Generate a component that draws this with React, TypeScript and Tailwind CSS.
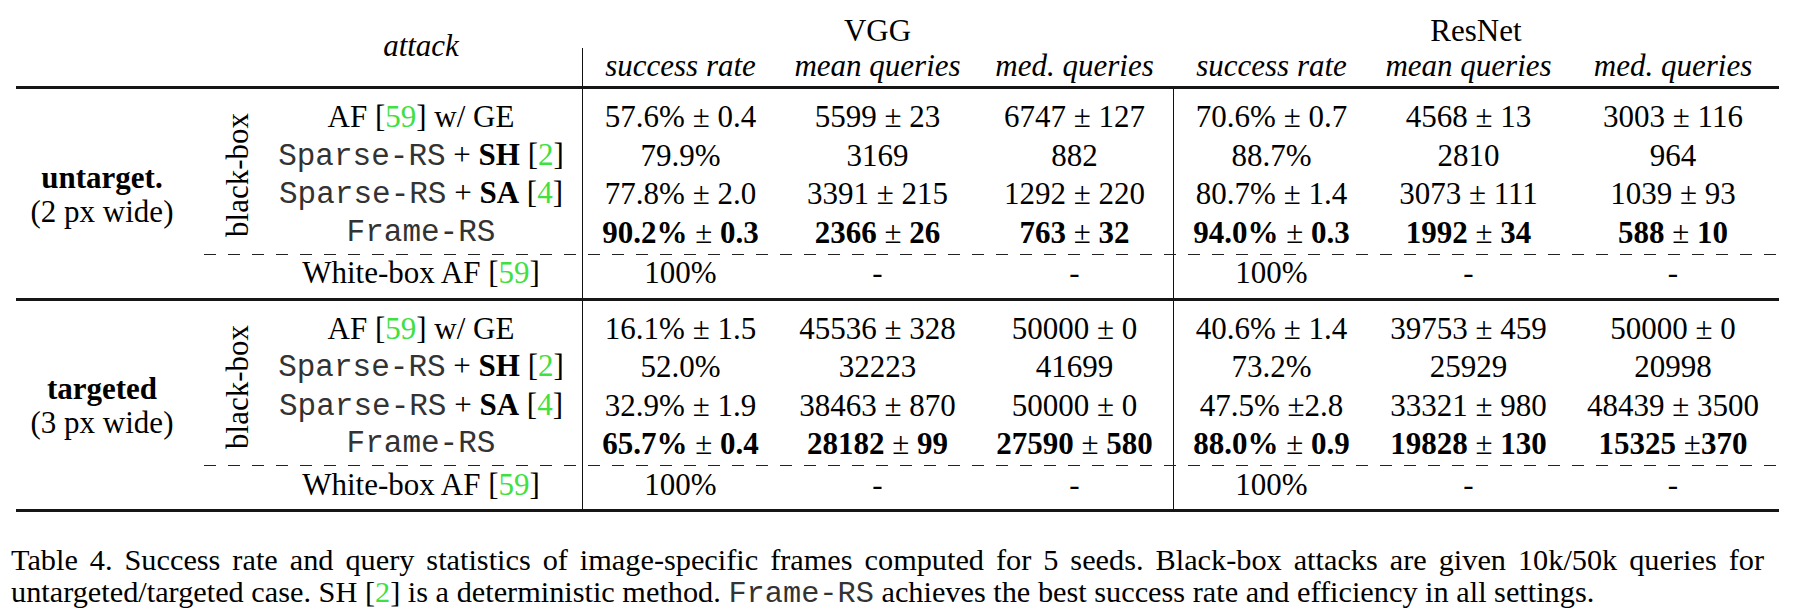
import React from "react";

const cols = "grid-cols-[172px_72px_322px_197px_197px_197px_197px_197px_212px]";
const bodyRows = "grid-rows-[9px_38.5px_38.5px_38.5px_38.5px_4px_35px_6.5px]";
const rowStarts = ["row-start-2", "row-start-3", "row-start-4", "row-start-5"];
const colStarts = ["col-start-4", "col-start-5", "col-start-6", "col-start-7", "col-start-8", "col-start-9"];

const Cite = ({ n }: { n: string }) => (
  <>
    [<span className="text-[#3fe03f]">{n}</span>]
  </>
);

const Mono = ({ children }: { children: React.ReactNode }) => (
  <span className="font-['Liberation_Mono',monospace] text-[#333]">{children}</span>
);

// "a ± b" with the numbers bold but the ± regular, as in the paper
function Value({ text, bold }: { text: string; bold?: boolean }) {
  if (!bold) return <span>{text}</span>;
  const parts = text.split("±");
  return (
    <span>
      <b>{parts[0]}</b>
      {parts.length > 1 && (
        <>
          ±<b>{parts[1]}</b>
        </>
      )}
    </span>
  );
}

type Section = {
  title: string;
  width: string;
  rows: string[][];
  best: string[];
};

const sections: Section[] = [
  {
    title: "untarget.",
    width: "(2 px wide)",
    rows: [
      ["57.6% ± 0.4", "5599 ± 23", "6747 ± 127", "70.6% ± 0.7", "4568 ± 13", "3003 ± 116"],
      ["79.9%", "3169", "882", "88.7%", "2810", "964"],
      ["77.8% ± 2.0", "3391 ± 215", "1292 ± 220", "80.7% ± 1.4", "3073 ± 111", "1039 ± 93"],
    ],
    best: ["90.2% ± 0.3", "2366 ± 26", "763 ± 32", "94.0% ± 0.3", "1992 ± 34", "588 ± 10"],
  },
  {
    title: "targeted",
    width: "(3 px wide)",
    rows: [
      ["16.1% ± 1.5", "45536 ± 328", "50000 ± 0", "40.6% ± 1.4", "39753 ± 459", "50000 ± 0"],
      ["52.0%", "32223", "41699", "73.2%", "25929", "20998"],
      ["32.9% ± 1.9", "38463 ± 870", "50000 ± 0", "47.5% ±2.8", "33321 ± 980", "48439 ± 3500"],
    ],
    best: ["65.7% ± 0.4", "28182 ± 99", "27590 ± 580", "88.0% ± 0.9", "19828 ± 130", "15325 ±370"],
  },
];

const attacks = [
  <span>
    AF <Cite n="59" /> w/ GE
  </span>,
  <span>
    <Mono>Sparse-RS</Mono> + <b>SH</b> <Cite n="2" />
  </span>,
  <span>
    <Mono>Sparse-RS</Mono> + <b>SA</b> <Cite n="4" />
  </span>,
  <Mono>Frame-RS</Mono>,
];

const whiteBox = ["100%", "-", "-", "100%", "-", "-"];

const cell = "flex items-center justify-center whitespace-nowrap";

function Rule() {
  return <div className="w-[1763px] h-[3px] bg-[#161616]" />;
}

function Body({ s }: { s: Section }) {
  const all = [...s.rows, s.best];
  return (
    <div className={`grid ${cols} ${bodyRows} w-[1763px]`}>
      <div className="col-start-4 row-start-1 row-span-8 border-l border-[#111]" />
      <div className="col-start-7 row-start-1 row-span-8 border-l border-[#111]" />

      <div className="col-start-1 row-start-2 row-span-6 flex flex-col items-center justify-center leading-[34px]">
        <b>{s.title}</b>
        <span>{s.width}</span>
      </div>
      <div className="col-start-2 row-start-2 row-span-4 flex items-center justify-center pl-[26px]">
        <span className="[writing-mode:vertical-rl] rotate-180 leading-none">black-box</span>
      </div>

      {attacks.map((a, i) => (
        <div key={i} className={`col-start-3 ${rowStarts[i]} ${cell}`}>
          {a}
        </div>
      ))}
      {all.map((r, i) =>
        r.map((v, j) => (
          <div key={`${i}-${j}`} className={`${colStarts[j]} ${rowStarts[i]} ${cell}`}>
            <Value text={v} bold={i === 3} />
          </div>
        ))
      )}

      <div className="col-start-2 col-span-8 row-start-6 self-center ml-[16px] h-px bg-[repeating-linear-gradient(90deg,#222_0_12px,transparent_12px_24px)]" />

      <div className={`col-start-3 row-start-7 ${cell}`}>
        <span>
          White-box AF <Cite n="59" />
        </span>
      </div>
      {whiteBox.map((v, j) => (
        <div key={j} className={`${colStarts[j]} row-start-7 ${cell}`}>
          {v}
        </div>
      ))}
    </div>
  );
}

export default function App() {
  const heads = ["success rate", "mean queries", "med. queries", "success rate", "mean queries", "med. queries"];

  return (
    <div className="w-[1796px] h-[616px] bg-white text-black pl-[16px] font-['Liberation_Serif',serif] text-[31px] leading-[38.5px] overflow-hidden">
      <div className={`grid ${cols} grid-rows-[50px_36px] w-[1763px]`}>
        <div className="col-start-3 row-start-1 row-span-2 flex items-center justify-center italic pt-[6px]">
          attack
        </div>
        <div className="col-start-4 col-span-3 row-start-1 flex items-end justify-center">VGG</div>
        <div className="col-start-7 col-span-3 row-start-1 flex items-end justify-center">ResNet</div>
        <div className="col-start-4 row-start-2 -mt-[2px] border-l border-[#111]" />
        {heads.map((h, j) => (
          <div key={j} className={`${colStarts[j]} row-start-2 ${cell} italic pb-[4px]`}>
            {h}
          </div>
        ))}
      </div>

      <Rule />
      <Body s={sections[0]} />
      <Rule />
      <Body s={sections[1]} />
      <Rule />

      <div className="mt-[32px] -ml-[5px] text-[30.3px] leading-[32px] whitespace-nowrap">
        <div className="w-[1753px] text-justify [text-align-last:justify]">
          Table 4. Success rate and query statistics of image-specific frames computed for 5 seeds. Black-box
          attacks are given 10k/50k queries for
        </div>
        <div>
          untargeted/targeted case. SH <Cite n="2" /> is a deterministic method. <Mono>Frame-RS</Mono> achieves
          the best success rate and efficiency in all settings.
        </div>
      </div>
    </div>
  );
}
